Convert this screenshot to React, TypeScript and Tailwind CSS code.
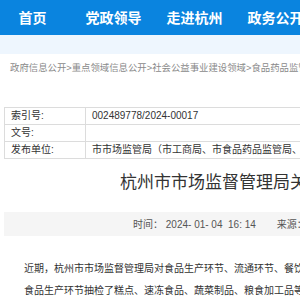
const nav = ["首页", "党政领导", "走进杭州", "政务公开", "政务服务"];

const rows = [
  { label: "索引号:", value: "002489778/2024-00017" },
  { label: "文号:", value: "" },
  { label: "发布单位:", value: "市市场监管局（市工商局、市食品药品监管局、市质监局）" },
];

const App = () => {
  return (
    <div
      className="w-[300px] h-[300px] overflow-hidden bg-white whitespace-nowrap"
      style={{ fontFamily: '"Liberation Sans", "Noto Sans CJK SC", sans-serif' }}
    >
      {/* top nav */}
      <div className="h-[35px] bg-[#0a84df] flex items-center -ml-[8px]">
        {nav.map((n) => (
          <div key={n} className="w-[81px] shrink-0 text-center text-white font-bold text-[14px] leading-none">
            {n}
          </div>
        ))}
      </div>
      <div className="h-[19px] bg-[#eef6fe]" />

      {/* breadcrumb */}
      <div className="mt-[8px] pl-[10px] h-[12px] leading-[12px] text-[9.4px] text-[#8a8a8a]">
        政府信息公开&gt;重点领域信息公开&gt;社会公益事业建设领域&gt;食品药品监管
      </div>

      <div className="pl-[4px]">
        {/* info table */}
        <div className="mt-[33px] border-t border-l border-[#dcdcdc] w-[400px]">
          {rows.map((r) => (
            <div key={r.label} className="flex h-[17px] border-b border-[#dcdcdc] text-[10px] text-[#333]">
              <div className="w-[81px] border-r border-[#dcdcdc] pl-[6px] leading-[16px]">{r.label}</div>
              <div className="pl-[6px] leading-[16px]">{r.value}</div>
            </div>
          ))}
        </div>

        {/* title */}
        <div className="mt-[12px] pl-[116px] h-[24px] leading-[24px] text-[17px] text-[#333]">
          杭州市市场监督管理局关于食品安全监督抽检情况的通告
        </div>

        {/* meta bar */}
        <div className="mt-[17px] h-[24px] bg-[#f5f5f5] flex items-center pl-[129px] text-[10px] text-[#555]">
          <span>时间： 2024- 01- 04&nbsp;&nbsp;16: 14</span>
          <span className="ml-[21px]">来源：市市场监管局</span>
        </div>

        {/* body */}
        <div className="mt-[22px] pl-[20px] text-[10px] leading-[22px] text-[#333]">
          <div>近期，杭州市市场监督管理局对食品生产环节、流通环节、餐饮环节</div>
          <div>食品生产环节抽检了糕点、速冻食品、蔬菜制品、粮食加工品等</div>
        </div>
      </div>
    </div>
  );
};

export default App;
